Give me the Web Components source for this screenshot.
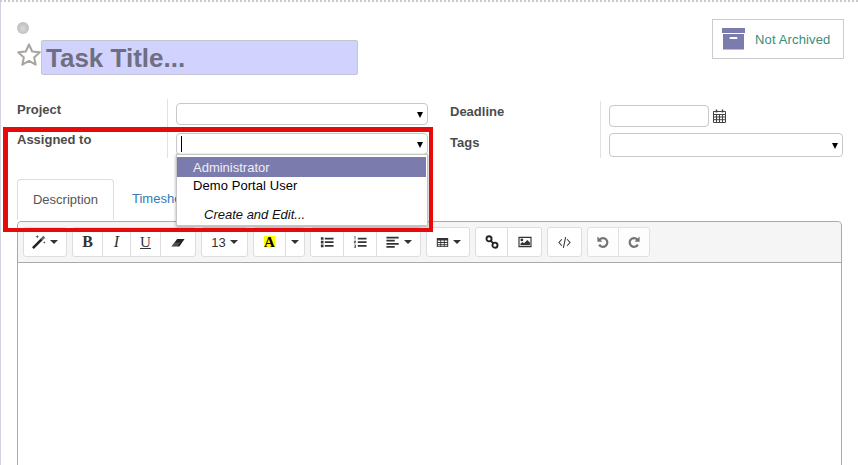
<!DOCTYPE html>
<html>
<head>
<meta charset="utf-8">
<title>Task</title>
<style>
  html, body { margin: 0; height: 100%; background: #fff; overflow: hidden; }
  body { font: 13px "Liberation Sans", Arial, sans-serif; color: #4c4c4c; }
</style>
</head>
<body>
<task-sheet></task-sheet>

<script>
// shared icons, FontAwesome style, drawn on a 16 box
const ICONS = {
    wand: '<path d="M1 15L11 5" stroke="#222" stroke-width="3" fill="none"/><path d="M11 5l3-3" stroke="#333" stroke-width="3" fill="none" opacity=".75"/><path d="M6 0l.5 1.500L8 2l-1.500.5L6 4l-.5-1.500L4 2l1.500-.5zM14 7l.4 1.100 1.100.4-1.100.4L14 10l-.4-1.100-1.100-.4 1.100-.4z"/>',
    eraser: '<path d="M0.5 13L7 4.500h8.500L9.500 13z" fill="#222"/><path d="M0.5 13L4 8.500h6.500L7 13z" fill="#fff" opacity=".2"/>',
    ul: '<path d="M1 2.500h3v3H1zM1 6.700h3v3H1zM1 10.900h3v3H1zM5.500 3h10v2h-10zM5.500 7.200h10v2h-10zM5.500 11.400h10v2h-10z"/>',
    ol: '<path d="M5.500 3h10v2h-10zM5.500 7.200h10v2h-10zM5.500 11.400h10v2h-10z"/><path d="M1.500 1.500h1.200v3.600h-.8V2.400h-.4zM1 6.600h2.400v.7L2 8.600h1.400v.7H1v-.7l1.500-1.300H1zM1 11h2.400v3.600H1v-.7h1.600v-.8H1.400v-.6h1.200v-.8H1z"/>',
    align: '<path d="M.5 2h14v2H.5zM.5 5.500h9.500v2H.5zM.5 9h14v2H.5zM.5 12.500h9.500v2H.5z"/>',
    table: '<path fill-rule="evenodd" d="M1 2.500h14v11H1zM2.200 5.500v2h3.100v-2zm4.200 0v2h3.200v-2zm4.300 0v2h3.100v-2zM2.200 8.500v1.800h3.100V8.500zm4.200 0v1.800h3.200V8.500zm4.300 0v1.800h3.100V8.500zM2.200 11.300v1.200h3.100v-1.200zm4.200 0v1.200h3.200v-1.200zm4.300 0v1.200h3.100v-1.200z"/>',
    link: '<g fill="none" stroke="#222" stroke-width="2.200"><circle cx="4.600" cy="4.400" r="2.900"/><circle cx="11.400" cy="11.600" r="2.900"/><path d="M6.500 6.400l3 3.200"/></g>',
    image: '<path fill-rule="evenodd" d="M.5 2h15v12H.5zM1.800 3.300v9.400h12.400V3.300z"/><circle cx="4.400" cy="5.600" r="1.600"/><path d="M2.800 11.800V10l2.400-2 1.800 1.400 3.600-3.800 3 3v3.200z"/>',
    code: '<path fill="none" stroke="#333" stroke-width="1.300" d="M4.800 4L1.200 8l3.600 4M11.200 4l3.600 4-3.600 4M9.400 1.500L6.600 14.500"/>',
    undo: '<path fill="none" stroke="#555" stroke-width="2.500" d="M4.200 5.200A5 5 0 1 1 3.600 11"/><path fill="#555" d="M1.600 1.800v5.800h5.800z"/>',
    redo: '<path fill="none" stroke="#555" stroke-width="2.500" d="M11.800 5.200A5 5 0 1 0 12.400 11"/><path fill="#555" d="M14.400 1.800v5.800H8.600z"/>'
};

// single button of the editor toolbar
class ToolButton extends HTMLElement {
    connectedCallback() {
        const icon = this.getAttribute('icon');
        const caret = this.hasAttribute('caret') ? '<i class="caret"></i>' : '';
        const size = this.getAttribute('size') || 14;
        const svg = icon ? `<svg width="${size}" height="${size}" viewBox="0 0 16 16" fill="#333">${ICONS[icon]}</svg>` : '';
        this.attachShadow({ mode: 'open' }).innerHTML = `
            <style>
                :host {
                    display: flex;
                    align-items: center;
                    justify-content: center;
                    gap: 4px;
                    box-sizing: border-box;
                    height: 30px;
                    background: #fff;
                    border: 1px solid #ddd;
                    margin-left: -1px;
                    color: #333;
                    font-size: 13px;
                }
                :host(:first-child) { margin-left: 0; border-radius: 3px 0 0 3px; }
                :host(:last-child) { border-radius: 0 3px 3px 0; }
                :host(:only-child) { border-radius: 3px; }
                .caret {
                    width: 0;
                    height: 0;
                    border-left: 4px solid transparent;
                    border-right: 4px solid transparent;
                    border-top: 4px solid #333;
                }
                svg { display: block; }
            </style>
            ${svg}<slot></slot>${caret}
        `;
    }
}

class ToolGroup extends HTMLElement {
    constructor() {
        super();
        this.attachShadow({ mode: 'open' }).innerHTML = `
            <style>
                :host { display: flex; margin-right: 5px; }
                :host([dim]) { opacity: .8; }
            </style>
            <slot></slot>
        `;
    }
}

class NoteEditor extends HTMLElement {
    constructor() {
        super();
        this.attachShadow({ mode: 'open' }).innerHTML = `
            <style>
                :host {
                    display: block;
                    box-sizing: border-box;
                    margin: 0 17px 0 17px;
                    width: 825px;
                    height: 260px;
                    border: 1px solid #a9a9a9;
                    border-radius: 4px 4px 0 0;
                }
                .bar {
                    display: flex;
                    box-sizing: border-box;
                    height: 41px;
                    padding: 5px 5px 0;
                    background: #f5f5f5;
                    border-bottom: 1px solid #a9a9a9;
                    border-radius: 4px 4px 0 0;
                }
                .b { font: bold 16px "Liberation Serif", serif; }
                .i { font: italic 16px "Liberation Serif", serif; }
                .u { font: 15px "Liberation Serif", serif; text-decoration: underline; }
                .a {
                    font: bold 15px/12px "Liberation Serif", serif;
                    background: #ff0;
                    color: #000;
                    width: 11px;
                    height: 11px;
                    margin-top: -2px;
                    text-align: center;
                }
            </style>
            <div class="bar">
                <tool-group><tool-button icon="wand" caret style="width:44px"></tool-button></tool-group>
                <tool-group>
                    <tool-button style="width:31px"><span class="b">B</span></tool-button>
                    <tool-button style="width:29px"><span class="i">I</span></tool-button>
                    <tool-button style="width:31px"><span class="u">U</span></tool-button>
                    <tool-button icon="eraser" style="width:36px"></tool-button>
                </tool-group>
                <tool-group><tool-button caret style="width:47px">13</tool-button></tool-group>
                <tool-group>
                    <tool-button style="width:33px"><span class="a">A</span></tool-button>
                    <tool-button caret style="width:20px"></tool-button>
                </tool-group>
                <tool-group>
                    <tool-button icon="ul" style="width:34px"></tool-button>
                    <tool-button icon="ol" style="width:34px"></tool-button>
                    <tool-button icon="align" caret style="width:45px"></tool-button>
                </tool-group>
                <tool-group><tool-button icon="table" size="13" caret style="width:44px"></tool-button></tool-group>
                <tool-group>
                    <tool-button icon="link" style="width:33px"></tool-button>
                    <tool-button icon="image" style="width:35px"></tool-button>
                </tool-group>
                <tool-group><tool-button icon="code" size="13" style="width:35px"></tool-button></tool-group>
                <tool-group dim>
                    <tool-button icon="undo" style="width:32px"></tool-button>
                    <tool-button icon="redo" style="width:32px"></tool-button>
                </tool-group>
            </div>
        `;
    }
}

// bordered input box, with the little arrow when it is a many2one
class FieldBox extends HTMLElement {
    connectedCallback() {
        const arrow = this.hasAttribute('arrow') ? '<span class="arrow"></span>' : '';
        const cursor = this.hasAttribute('focused') ? '<span class="cursor"></span>' : '';
        this.attachShadow({ mode: 'open' }).innerHTML = `
            <style>
                :host {
                    display: flex;
                    align-items: center;
                    justify-content: space-between;
                    box-sizing: border-box;
                    height: 22px;
                    padding: 0 4px;
                    background: #fff;
                    border: 1px solid #c8c8c8;
                    border-radius: 4px;
                }
                .arrow {
                    margin-left: auto;
                    margin-top: 2px;
                    width: 0;
                    height: 0;
                    border-left: 3px solid transparent;
                    border-right: 3px solid transparent;
                    border-top: 6px solid #000;
                }
                .cursor { width: 1px; height: 16px; background: #000; }
            </style>
            ${cursor}${arrow}
        `;
    }
}

// one label + control line of the form
class FormRow extends HTMLElement {
    constructor() {
        super();
        this.attachShadow({ mode: 'open' }).innerHTML = `
            <style>
                :host {
                    display: grid;
                    grid-template-columns: 151px 1fr;
                    font-weight: bold;
                    color: #4c4c4c;
                    font-size: 13px;
                }
                .label {
                    border-right: 1px solid #e2e2e2;
                    padding-top: var(--label-top, 4px);
                    padding-bottom: var(--label-bottom, 0);
                    line-height: 15px;
                }
                .control {
                    padding: var(--control-top, 4px) 0 var(--control-bottom, 0) 8px;
                    display: flex;
                    align-items: flex-start;
                }
            </style>
            <div class="label"><slot name="label"></slot></div>
            <div class="control"><slot></slot></div>
        `;
    }
}

class ArchiveButton extends HTMLElement {
    constructor() {
        super();
        this.attachShadow({ mode: 'open' }).innerHTML = `
            <style>
                :host {
                    display: flex;
                    align-items: center;
                    box-sizing: border-box;
                    width: 132px;
                    height: 40px;
                    padding-left: 9px;
                    gap: 10px;
                    border: 1px solid #ccc;
                    color: #3b8d76;
                    font-size: 13px;
                    letter-spacing: .15px;
                    background: #fff;
                }
                svg { display: block; margin-top: -1px; }
            </style>
            <svg width="23" height="22" viewBox="0 0 23 22" fill="#7c7bad">
                <path d="M0 0h23v5H0z"/>
                <path fill-rule="evenodd" d="M1 6h21v15.500H1zM8.500 9a.8.8 0 0 0 0 2h6a.8.8 0 0 0 0-2z"/>
            </svg>
            <slot></slot>
        `;
    }
}

class CompleteMenu extends HTMLElement {
    constructor() {
        super();
        this.attachShadow({ mode: 'open' }).innerHTML = `
            <style>
                :host {
                    position: absolute;
                    left: 0;
                    top: 21px;
                    z-index: 5;
                    display: block;
                    box-sizing: border-box;
                    width: 252px;
                    height: 72px;
                    padding: 2px 0 0;
                    background: #fff;
                    border: 1px solid #c4c4c4;
                    box-shadow: 0 1px 3px rgba(0, 0, 0, .35);
                    font-weight: normal;
                    color: #000;
                    line-height: 19px;
                }
                div { padding-left: 16px; margin-right: 1px; }
                .active { background: #7c7bad; color: #eeeef6; height: 20px; line-height: 21px; }
                .demo { height: 19px; line-height: 18px; letter-spacing: .07px; }
                .create { font-style: italic; padding-left: 27px; margin-top: 10px; line-height: 18px; color: #111; }
            </style>
            <div class="active">Administrator</div>
            <div class="demo">Demo Portal User</div>
            <div class="create">Create and Edit...</div>
        `;
    }
}

class TaskTabs extends HTMLElement {
    constructor() {
        super();
        this.attachShadow({ mode: 'open' }).innerHTML = `
            <style>
                :host {
                    display: flex;
                    box-sizing: border-box;
                    height: 42px;
                    margin: 0 17px;
                    font-size: 13px;
                }
                .tab {
                    box-sizing: border-box;
                    height: 41px;
                    line-height: 40px;
                    padding: 0 15px;
                    color: #337ab7;
                }
                .active {
                    width: 97px;
                    text-align: center;
                    padding: 0;
                    color: #555;
                    background: #fff;
                    border: 1px solid #ddd;
                    border-bottom-color: #fff;
                    border-radius: 4px 4px 0 0;
                    margin-right: 3px;
                }
            </style>
            <div class="tab active">Description</div>
            <div class="tab">Timesheets</div>
        `;
    }
}

class TaskSheet extends HTMLElement {
    constructor() {
        super();
        this.attachShadow({ mode: 'open' }).innerHTML = `
            <style>
                :host {
                    display: block;
                    position: relative;
                    box-sizing: border-box;
                    width: 858px;
                    height: 465px;
                    overflow: hidden;
                    background: #fff;
                    border-top: 2px dotted #c9c9c9;
                    box-shadow: inset 1px 0 0 #d4d4e0;
                }
                .head {
                    display: flex;
                    justify-content: space-between;
                    box-sizing: border-box;
                    height: 97px;
                    padding: 17px 14px 0 17px;
                }
                .state {
                    width: 12px;
                    height: 12px;
                    margin-top: 3px;
                    border-radius: 50%;
                    background: radial-gradient(circle at 50% 55%, #d8d8d8, #b4b4b4);
                }
                .title-line { display: flex; margin-top: 6px; }
                .star { display: block; margin-top: 3px; }
                .title {
                    box-sizing: border-box;
                    width: 317px;
                    height: 35px;
                    padding-left: 4px;
                    background: #d2d2ff;
                    border: 1px solid #c4c4d4;
                    border-radius: 2px;
                    font: bold 26px/34px "Liberation Sans", sans-serif;
                    color: #6f6f83;
                }
                .form {
                    display: flex;
                    padding-left: 17px;
                    height: 80px;
                }
                .col-left { width: 411px; margin-right: 22px; }
                .col-right { width: 393px; padding-top: 2px; }
                field-box { flex: 1; }
                .date { flex: 0 0 100px; }
                .cal { display: block; margin: 4px 0 0 4px; }
                .anchor { flex: 1; position: relative; display: flex; }
                .l1 { --label-top: 3px; --label-bottom: 11px; --control-top: 4px; --control-bottom: 4px; }
                .l2 { --label-top: 3px; --label-bottom: 0; --control-top: 4px; height: 29px; }
                .r1 { --label-top: 3px; --label-bottom: 6px; --control-top: 4px; --control-bottom: 6px; }
                .r2 { --label-top: 2px; --label-bottom: 8px; --control-top: 0; --control-bottom: 0; height: 25px; }
                .r2 field-box { height: 24px; }
                .mark {
                    position: absolute;
                    left: 3px;
                    top: 125px;
                    z-index: 9;
                    box-sizing: border-box;
                    width: 430px;
                    height: 105px;
                    border: solid #e60b0b;
                    border-width: 5px 4px 4px 5px;
                    pointer-events: none;
                }
            </style>
            <div class="head">
                <div>
                    <div class="state"></div>
                    <div class="title-line">
                        <svg class="star" width="24" height="23" viewBox="0 0 24 23">
                            <path d="M12 1.500l3.200 7 7.600.8-5.700 5.100 1.600 7.300-6.700-3.800-6.700 3.800 1.600-7.300-5.700-5.100 7.600-.8z" fill="#fff" stroke="#a8a49f" stroke-width="2" stroke-linejoin="round"/>
                        </svg>
                        <div class="title">Task Title...</div>
                    </div>
                </div>
                <archive-button>Not Archived</archive-button>
            </div>
            <div class="form">
                <div class="col-left">
                    <form-row class="l1"><span slot="label">Project</span><field-box arrow></field-box></form-row>
                    <form-row class="l2">
                        <span slot="label">Assigned to</span>
                        <div class="anchor">
                            <field-box arrow focused></field-box>
                            <complete-menu></complete-menu>
                        </div>
                    </form-row>
                </div>
                <div class="col-right">
                    <form-row class="r1">
                        <span slot="label">Deadline</span>
                        <field-box class="date"></field-box>
                        <svg class="cal" width="13" height="14" viewBox="0 0 13 14" fill="none" stroke="#444">
                            <path d="M.5 2.500h12v11H.5zM.5 5.500h12M.5 8h12M.5 10.700h12M3.500 5.500v8M6.500 5.500v8M9.500 5.500v8"/>
                            <path d="M3.500 .5v3M9.500 .5v3" stroke-width="1.500"/>
                        </svg>
                    </form-row>
                    <form-row class="r2"><span slot="label">Tags</span><field-box arrow></field-box></form-row>
                </div>
            </div>
            <task-tabs></task-tabs>
            <note-editor></note-editor>
            <div class="mark"></div>
        `;
    }
}

customElements.define('tool-button', ToolButton);
customElements.define('tool-group', ToolGroup);
customElements.define('note-editor', NoteEditor);
customElements.define('field-box', FieldBox);
customElements.define('form-row', FormRow);
customElements.define('archive-button', ArchiveButton);
customElements.define('complete-menu', CompleteMenu);
customElements.define('task-tabs', TaskTabs);
customElements.define('task-sheet', TaskSheet);
</script>
</body>
</html>
